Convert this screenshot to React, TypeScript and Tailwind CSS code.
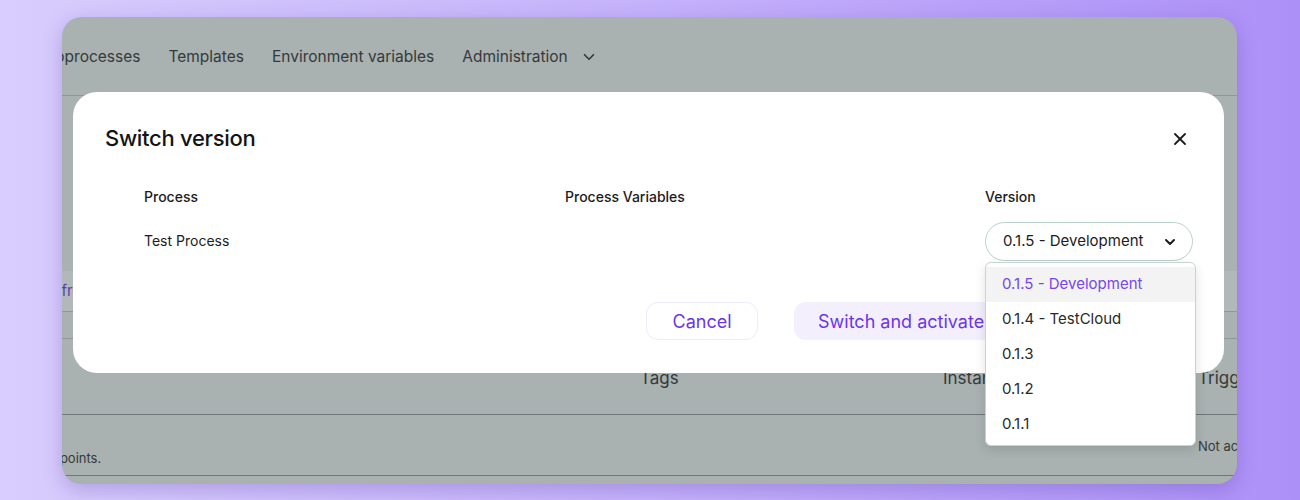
import { ChevronDown, X } from "lucide-react";

const versions = [
  "0.1.5 - Development",
  "0.1.4 - TestCloud",
  "0.1.3",
  "0.1.2",
  "0.1.1",
];

const font = "font-['Inter','Noto_Sans',sans-serif]";

function NavBar() {
  return (
    <div className="flex h-[79px] shrink-0 items-center border-b border-[#8f9898] pt-[2px]">
      <nav className="-ml-[26px] flex items-center gap-[28px] text-[15.5px] text-[#343a3a]">
        <span>Subprocesses</span>
        <span>Templates</span>
        <span>Environment variables</span>
        <span className="flex items-center gap-[12px]">
          Administration
          <ChevronDown size={18} strokeWidth={2.2} />
        </span>
      </nav>
    </div>
  );
}

function PageBehind() {
  return (
    <div className="flex flex-1 flex-col">
      <div className="h-[175px]" />
      <div className="flex h-[41px] items-center whitespace-nowrap border-b border-[#8f9898] bg-[#b1b8b9] text-[15px] text-[#5b3fb0]">
        <span className="-ml-[52px]">Create from template</span>
      </div>
      <div className="h-[27px] border-b border-[#8f9898]" />
      <div className="relative h-[76px] whitespace-nowrap border-b border-[#6f7878] text-[17px] text-[#343a3a]">
        <span className="absolute left-[578px] top-[27px]">Tags</span>
        <span className="absolute left-[881px] top-[27px]">Instances</span>
        <span className="absolute left-[1136px] top-[27px]">Triggers</span>
      </div>
      <div className="relative h-[61px] whitespace-nowrap border-b border-[#6f7878] text-[13px] text-[#343a3a]">
        <span className="absolute -left-[122px] top-[34px]">Manage your entry points.</span>
        <span className="absolute left-[1136px] top-[22px]">Not active</span>
      </div>
    </div>
  );
}

function VersionMenu() {
  return (
    <div className="absolute left-[912px] top-[170px] z-10 w-[211px] overflow-hidden rounded-[6px] border border-[#c9d3d2] bg-white pb-[3px] pt-[4px] shadow-[0_4px_12px_rgba(0,0,0,0.12)]">
      {versions.map((v, i) => (
        <div
          key={v}
          className={
            i === 0
              ? "flex h-[35px] items-center bg-[#f3f3f3] px-[16px] text-[15px] text-[#7747ea]"
              : "flex h-[35px] items-center px-[16px] text-[15px] text-[#2a2a2a]"
          }
        >
          {v}
        </div>
      ))}
    </div>
  );
}

function SwitchVersionDialog() {
  return (
    <div className="absolute left-[11px] top-[75px] h-[281px] w-[1151px] rounded-[24px] bg-white">
      <div className="flex items-center justify-between pl-[32px] pr-[34px] pt-[30px]">
        <h2 className="text-[22px] font-medium tracking-[-0.3px] text-[#141414]">Switch version</h2>
        <X size={20} strokeWidth={2.2} className="text-[#1a1a1a]" />
      </div>

      <div className="mt-[26px] grid grid-cols-[421px_420px_1fr] pl-[71px] text-[14px] text-[#1c1c1c]">
        <div className="flex h-[30px] items-center font-medium">Process</div>
        <div className="flex h-[30px] items-center font-medium">Process Variables</div>
        <div className="flex h-[30px] items-center font-medium">Version</div>

        <div className="mt-[10px] flex h-[38px] items-center">Test Process</div>
        <div />
        <div className="mt-[11px] flex h-[39px] w-[208px] items-center justify-between rounded-full border-[1.5px] border-[#b9d0cd] pl-[17px] pr-[14px] text-[15px] text-[#1c1c1c]">
          0.1.5 - Development
          <ChevronDown size={16} strokeWidth={3} />
        </div>
      </div>

      <div className="mt-[41px] flex gap-[36px] pl-[573px] text-[18px]">
        <button className="h-[38px] w-[112px] rounded-[12px] border border-[#efeafb] text-[#6c35e8]">
          Cancel
        </button>
        <button className="h-[38px] w-[220px] rounded-[12px] bg-[#f3effd] pl-[24px] text-left text-[#6c35e8]">
          Switch and activate
        </button>
      </div>

      <VersionMenu />
    </div>
  );
}

export default function App() {
  return (
    <div
      className={`h-[500px] w-full overflow-hidden bg-linear-to-r from-[#d8cdfd] via-[#c5b2fb] to-[#ad90f7] pl-[62px] pr-[63px] pt-[17px] ${font}`}
    >
      <div className="relative flex h-[467px] flex-col overflow-hidden rounded-[20px] bg-[#a9b1b1] shadow-[0_6px_20px_rgba(70,40,150,0.25)]">
        <NavBar />
        <PageBehind />
        <SwitchVersionDialog />
      </div>
    </div>
  );
}
